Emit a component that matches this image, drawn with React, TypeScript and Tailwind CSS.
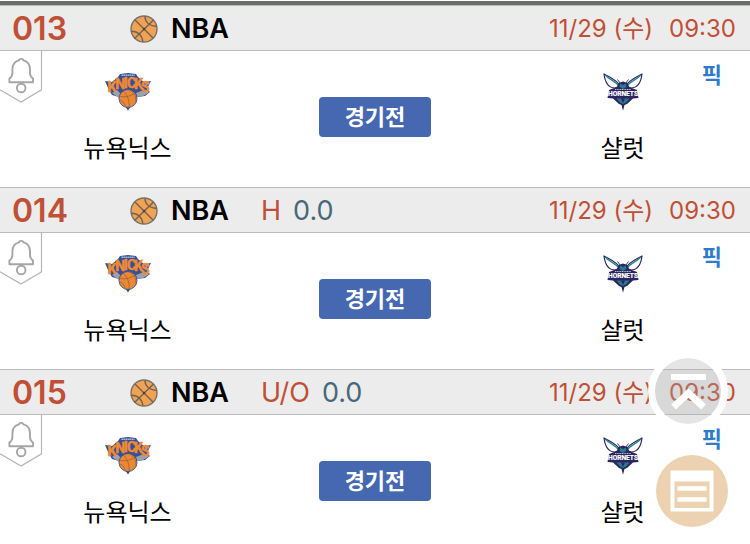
import React from 'react';

type Game = {
  id: string;
  league: string;
  type?: string;
  line?: string;
  date: string;
  time: string;
  home: string;
  away: string;
  status: string;
};

const base = {
  league: 'NBA',
  date: '11/29 (수)',
  time: '09:30',
  home: '뉴욕닉스',
  away: '샬럿',
  status: '경기전',
};

const games: Game[] = [
  { id: '013', ...base },
  { id: '014', ...base, type: 'H', line: '0.0' },
  { id: '015', ...base, type: 'U/O', line: '0.0' },
];

function BasketballIcon() {
  return (
    <svg viewBox="0 0 28 28" className="size-7 shrink-0" fill="none" stroke="#6e6354" strokeWidth="1.4" aria-hidden="true">
      <circle cx="14" cy="14" r="13" fill="#f1a252" stroke="#77736d" />
      <path d="M5 5 23 23M23.5 5 4.5 23.5" />
      <path d="M15 1.2C15 7 19.2 11 26.8 11.4" />
      <path d="M1.2 16.2C7.8 16 12.4 20.4 12.8 26.8" />
      <path d="M14 14h.1" strokeWidth="2.4" strokeLinecap="round" stroke="#4a443c" />
    </svg>
  );
}

function BellTag() {
  return (
    <svg viewBox="0 0 43 52" className="h-[52px] w-[43px]" fill="none" aria-hidden="true">
      <path d="M41.5 0V38.8L21 51 0 38.8" stroke="#b5b5b5" strokeWidth="1.2" />
      <g stroke="#a6a6a6" strokeWidth="1.9" strokeLinejoin="round">
        <path d="M19 9.4C19 7.3 23.4 7.3 23.4 9.4 28 10.6 30 14 30 18.5V22C30 25 31 26.2 33 27.6V31.2H9.4V27.6C11.4 26.2 12.4 25 12.4 22V18.5C12.4 14 14.4 10.6 19 9.4Z" />
        <circle cx="21.2" cy="37" r="4.3" fill="#fff" />
      </g>
    </svg>
  );
}

function KnicksLogo() {
  return (
    <svg viewBox="0 0 46 40" className="h-10 w-[46px]" role="img" aria-label="New York Knicks">
      <path d="M0 10 7 11 13 6 15 3 23 2 31 3 33 6 39 11 46 10 42 18 45 21 40 25 32 26 23 39.5 14 26 7 24 4 19Z" fill="#34509a" />
      <path d="M2.5 11.5 6 12 5 16ZM43.5 11.5 40 12 41 16Z" fill="#9aa4b4" />
      <path d="M7 22 12 19 17 24 14 27ZM31 22 40 18.5 44 21.5 38 25 32 26Z" fill="#9aa2a8" />
      <path d="M16.5 4.2H29.5" stroke="#c6cde2" strokeWidth="1.6" strokeDasharray="1.3 .7" />
      <text
        x="2.6 10.2 18.8 22 29 36"
        y="20.6 18.4 17.2 17.2 18.4 20.6"
        fill="#f08a32"
        stroke="#f08a32"
        strokeWidth="0.5"
        fontSize="14"
        fontWeight="700"
        fontFamily="Roboto, Liberation Sans, sans-serif"
      >
        KNICKS
      </text>
      <circle cx="23" cy="27.5" r="9" fill="#e98836" stroke="#34509a" strokeWidth="0.9" />
      <path d="M14.5 25C20 27 27 25 30 21.5M18 20C22 23 25 30 24 36.4M24 18.6C29 21 31.5 26 30.8 31.6M14.4 29.5C17 29 20 32 20 35.8" fill="none" stroke="#a3602f" strokeWidth="0.8" />
    </svg>
  );
}

function HornetsLogo() {
  return (
    <svg viewBox="0 0 46 40" className="h-10 w-[46px]" role="img" aria-label="Charlotte Hornets">
      <g fill="#fff" stroke="#2c2560" strokeWidth="1.2" strokeLinejoin="round">
        <path d="M4 3C5 11 8 17 15 17L20 15C17 9 11 7 4 3Z" />
        <path d="M42 3C41 11 38 17 31 17L26 15C29 9 35 7 42 3Z" />
      </g>
      <path d="M5 4C10 9 15 10 19 15M41 4C36 9 31 10 27 15" fill="none" stroke="#28838d" strokeWidth="1.3" />
      <path d="M17.5 8.5 20.5 12.5M28.5 8.5 25.5 12.5" stroke="#2c2560" strokeWidth="0.9" />
      <path d="M18.5 12 23 10.5 27.5 12 29 16 37 19 38.5 27 33 27.5 27 33 24.5 34 23 39.8 21.5 34 19 33 13 27.5 7.5 27 9 19 17 16Z" fill="#2c2560" />
      <path d="M20 12.5 23 14 26 12.5 26.5 16 23 18 19.5 16ZM16.5 27.5H29.5L26 31.5 23 33 20 31.5Z" fill="#237c88" />
      <path d="M21 27.5H25L23 32Z" fill="#2c2560" />
      <path d="M15 18.5H31" stroke="#b9b6d0" strokeWidth="1" strokeDasharray="1.2 .5" />
      <text
        x="23"
        y="25.3"
        textAnchor="middle"
        fontSize="6.6"
        fontWeight="700"
        fill="#fff"
        stroke="#fff"
        strokeWidth="0.2"
        fontFamily="Roboto, Liberation Sans, sans-serif"
      >
        HORNETS
      </text>
    </svg>
  );
}

function Team({ name, children }: { name: string; children: React.ReactNode }) {
  return (
    <div className="flex flex-col items-center pt-5">
      {children}
      <span className="mt-[22px] text-2xl leading-8">{name}</span>
    </div>
  );
}

function GameRow({ game }: { game: Game }) {
  return (
    <article>
      <header className="flex h-[46px] items-center border-y border-[#bcbcbc] bg-[#ececec] pt-[2px] pr-[14px] pl-3 whitespace-nowrap">
        <span className="w-[118px] text-[32px] font-semibold text-[#c05035]">{game.id}</span>
        <BasketballIcon />
        <h2 className="ml-[13px] text-[27px] font-semibold">{game.league}</h2>
        {game.type && (
          <p className="ml-8 flex gap-3 text-[27px] text-[#46687a]">
            <span className="text-[#c05035]">{game.type}</span>
            <span>{game.line}</span>
          </p>
        )}
        <time className="ml-auto flex gap-4 text-2xl text-[#c05035]">
          <span>{game.date}</span>
          <span>{game.time}</span>
        </time>
      </header>
      <div className="relative grid min-h-[136px] grid-cols-[34fr_32fr_34fr] items-start">
        <button type="button" aria-label="알림" className="absolute top-0 left-0">
          <BellTag />
        </button>
        <Team name={game.home}>
          <KnicksLogo />
        </Team>
        <button type="button" className="mt-[46px] h-10 w-28 justify-self-center rounded-sm bg-[#4668b0] text-[22px] font-bold text-white">
          {game.status}
        </button>
        <Team name={game.away}>
          <HornetsLogo />
        </Team>
        <a href="#pick" className="absolute top-2 right-7 text-[22px] leading-8 font-bold text-[#2e7bcb]">
          픽
        </a>
      </div>
    </article>
  );
}

function FloatingActions() {
  return (
    <div className="fixed right-[22px] bottom-[17px] flex flex-col items-end gap-6">
      <button type="button" aria-label="맨 위로" className="size-20 rounded-full border-[7px] border-white bg-[#aaaaaa]/30 bg-clip-padding">
        <svg viewBox="0 0 66 66" className="size-full" fill="none" stroke="#fff" aria-hidden="true">
          <path d="M16 19H51" strokeWidth="6" />
          <path d="M18.5 49 33.5 35 48.5 49" strokeWidth="7" />
        </svg>
      </button>
      <button type="button" aria-label="목록" className="size-[72px] rounded-full bg-[#ecd2b0]">
        <svg viewBox="0 0 72 72" className="size-full" aria-hidden="true">
          <rect x="14.5" y="15.5" width="43" height="41" fill="#fff" />
          <rect x="18.5" y="26.5" width="35" height="26.5" fill="#ecd2b0" />
          <path d="M21.5 33.5H50.5M21.5 44.5H50.5" stroke="#fff" strokeWidth="4.4" />
        </svg>
      </button>
    </div>
  );
}

export default function App() {
  return (
    <main className="min-h-screen border-t border-white bg-white font-['Inter','Noto_Sans_CJK_KR',sans-serif] text-black">
      <div className="h-1 bg-[#6b6d6b]" />
      {games.map((game) => (
        <GameRow key={game.id} game={game} />
      ))}
      <FloatingActions />
    </main>
  );
}
